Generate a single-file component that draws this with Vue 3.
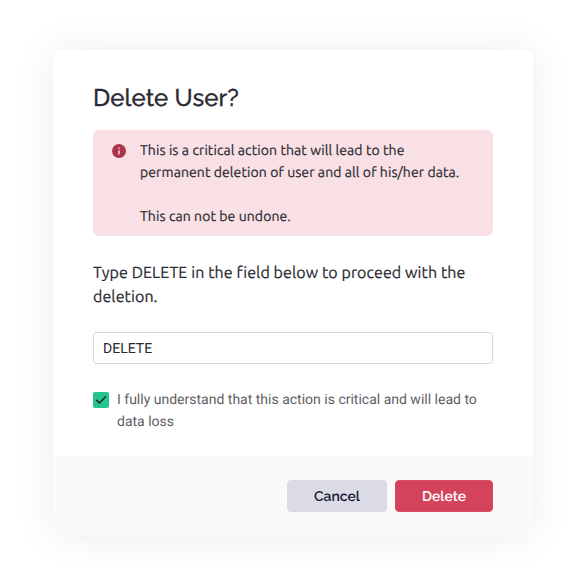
<script setup>
import { ref } from 'vue'

const confirmation = ref('DELETE')
const understood = ref(true)
</script>

<template>
  <main class="page">
    <section class="dialog" role="dialog" aria-labelledby="title">
      <div class="content">
        <h1 id="title" class="title">Delete User?</h1>
        <div class="alert">
          <svg class="info" viewBox="0 0 14 14" aria-hidden="true">
            <circle cx="7" cy="7" r="7" fill="#ad3349" />
            <rect x="6.3" y="3.5" width="1.4" height="1.4" fill="#f9e0e4" />
            <rect x="6.3" y="6.3" width="1.4" height="4.2" fill="#f9e0e4" />
          </svg>
          <div class="message">
            This is a critical action that will lead to the<br />
            permanent deletion of user and all of his/her data.<br />
            <br />
            This can not be undone.
          </div>
        </div>
        <p class="prompt">
          Type DELETE in the field below to proceed with the<br />
          deletion.
        </p>
        <input v-model="confirmation" class="field" type="text" spellcheck="false" />
        <label class="agree">
          <input v-model="understood" class="native" type="checkbox" />
          <span class="box">
            <svg v-if="understood" viewBox="0 0 16 16" aria-hidden="true">
              <path d="M3.2 7.8 6.4 11 12.8 4.4" fill="none" stroke="#15262a" stroke-width="1.5" />
            </svg>
          </span>
          <span class="agree-text">I fully understand that this action is critical and will lead to<br />data loss</span>
        </label>
      </div>
      <footer class="footer">
        <button class="btn cancel" type="button">Cancel</button>
        <button class="btn delete" type="button">Delete</button>
      </footer>
    </section>
  </main>
</template>

<style>
body {
  background: #fff;
}
</style>

<style scoped>
.page {
  box-sizing: border-box;
  width: 586px;
  height: 586px;
  padding: 50px 53px;
  overflow: hidden;
  text-rendering: geometricPrecision;
}
.dialog {
  display: flex;
  flex-direction: column;
  height: 486px;
  border-radius: 8px;
  background: #fff;
  box-shadow: 0 0 40px rgba(0, 0, 0, 0.08);
  overflow: hidden;
}
.content {
  flex: 1;
  padding: 32px 40px 0;
}
.title {
  margin: 0;
  height: 48px;
  font: 500 24px/32px Raleway, Lato, sans-serif;
  letter-spacing: 0.1px;
  color: #2a2a33;
  -webkit-text-stroke: 0.3px #2a2a33;
  white-space: nowrap;
}
.alert {
  display: flex;
  box-sizing: border-box;
  height: 106px;
  padding: 9px 19px;
  gap: 14px;
  border-radius: 6px;
  background: #f9e0e4;
}
.info {
  flex: none;
  width: 14px;
  height: 14px;
  margin-top: 5px;
}
.message {
  font: 400 14px/22px Ubuntu, "Noto Sans", sans-serif;
  letter-spacing: 0.085px;
  color: #2a2a33;
  -webkit-text-stroke: 0.2px #2a2a33;
  white-space: nowrap;
}
.prompt {
  margin: 25px 0 0;
  font: 400 16px/24px Ubuntu, "Noto Sans", sans-serif;
  letter-spacing: 0.09px;
  color: #2a2a33;
  -webkit-text-stroke: 0.2px #2a2a33;
  white-space: nowrap;
}
.field {
  display: block;
  box-sizing: border-box;
  width: 100%;
  height: 32px;
  margin: 23px 0 0;
  padding: 2px 9px 0;
  border: 1px solid #d6d6d8;
  border-radius: 4px;
  outline: none;
  background: #fff;
  color: #2a2a33;
  font: 400 14px Roboto, sans-serif;
  text-rendering: geometricPrecision;
}
.agree {
  display: flex;
  position: relative;
  gap: 8px;
  margin-top: 24px;
}
.native {
  position: absolute;
  margin: 0;
  opacity: 0;
}
.box {
  flex: none;
  width: 16px;
  height: 16px;
  margin-top: 4px;
  border-radius: 2px;
  background: #23c48e;
}
.box svg {
  display: block;
}
.agree-text {
  padding-top: 1px;
  font: 400 14px/22px Roboto, sans-serif;
  color: #606066;
  white-space: nowrap;
}
.footer {
  display: flex;
  justify-content: flex-end;
  gap: 8px;
  box-sizing: border-box;
  height: 80px;
  padding: 24px 40px;
  background: #fafafa;
}
.btn {
  box-sizing: border-box;
  height: 32px;
  padding: 2px 0 0;
  border: 1px solid transparent;
  border-radius: 4px;
  font: 600 14px/28px Raleway, Lato, sans-serif;
  text-rendering: geometricPrecision;
  white-space: nowrap;
}
.cancel {
  width: 100px;
  background: #dadbe4;
  border-color: #dadbe4;
  color: #1b1a3a;
}
.delete {
  width: 98px;
  background: #d3435c;
  border-color: #d94c65;
  color: #fff;
}
</style>
